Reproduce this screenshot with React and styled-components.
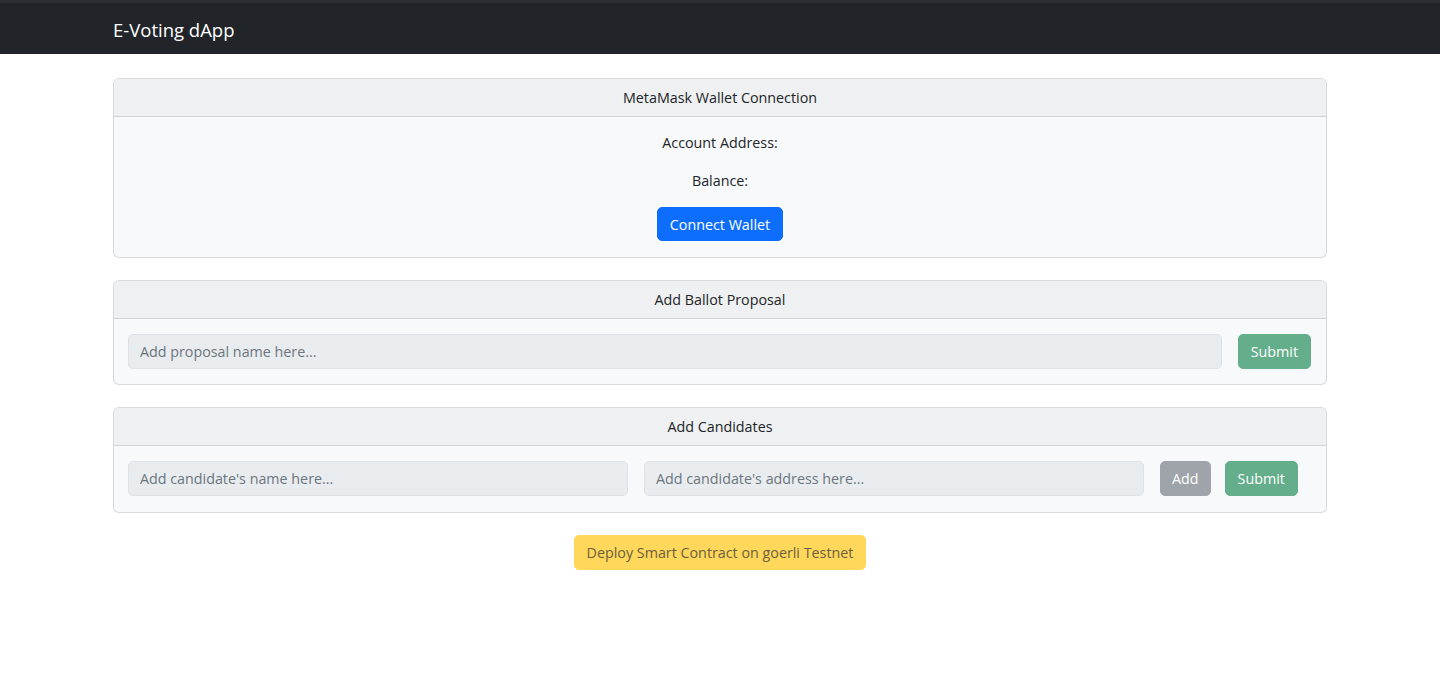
import React from 'react';
import styled, { createGlobalStyle } from 'styled-components';

const GlobalStyle = createGlobalStyle`
    body {
        margin: 0;
        background: #fff;
        font-family: 'Open Sans', 'Noto Sans', sans-serif;
        font-size: 14.3px;
        color: #212529;
    }
    * { box-sizing: border-box; }
`

const Navbar = styled.nav`
    height: 54px;
    background-color: #212529;
    border-top: 3px solid #2c2f33;
    display: flex;
    align-items: center;
    padding-left: 113px;
`

const Brand = styled.div`
    color: #fff;
    font-size: 18.5px;
    padding-top: 2px;
`

const Main = styled.main`
    width: 1214px;
    margin: 24px auto 0;
    display: flex;
    flex-direction: column;
    gap: 22px;
`

const Card = styled.section`
    border: 1px solid rgba(0,0,0,0.12);
    border-radius: 6px;
    background-color: #f8f9fa;
    overflow: hidden;
`

const CardHeader = styled.div`
    height: 38px;
    display: flex;
    align-items: center;
    justify-content: center;
    background-color: #eff0f1;
    border-bottom: 1px solid rgba(0,0,0,0.12);
`

const CenterBody = styled.div`
    display: flex;
    flex-direction: column;
    align-items: center;
    gap: 14px;
    padding: 14px 15px 16px;
`

const Line = styled.div`
    line-height: 24px;
`

const RowBody = styled.div`
    display: ${props => props.grid ? 'grid' : 'flex'};
    grid-template-columns: 500px 500px auto auto;
    justify-content: start;
    gap: 16px;
    padding: 15px 15px ${props => props.grid ? 16 : 15}px 14px;
`

const Input = styled.input`
    flex: 1;
    height: 35px;
    padding: 0 11px;
    font-family: inherit;
    font-size: 14.3px;
    color: #212529;
    background-color: #e9ecef;
    border: 1px solid #dee2e6;
    border-radius: 5px;
    &::placeholder { color: #6c757d; }
`

const Button = styled.button`
    height: ${props => props.h || 35}px;
    padding: 0 ${props => props.px || 12}px;
    font-family: inherit;
    font-size: 14.3px;
    color: ${props => props.fg || '#fff'};
    background-color: ${props => props.bg};
    border: 1px solid ${props => props.bg};
    border-radius: 5px;
    cursor: pointer;
`

const Footer = styled.div`
    display: flex;
    justify-content: center;
`

export default function App() {
    return (
        <>
            <GlobalStyle />
            <Navbar>
                <Brand>E-Voting dApp</Brand>
            </Navbar>
            <Main>
                <Card>
                    <CardHeader>MetaMask Wallet Connection</CardHeader>
                    <CenterBody>
                        <Line>Account Address:</Line>
                        <Line>Balance:</Line>
                        <Button bg="#0d6efd" h={34}>Connect Wallet</Button>
                    </CenterBody>
                </Card>
                <Card>
                    <CardHeader>Add Ballot Proposal</CardHeader>
                    <RowBody>
                        <Input disabled placeholder="Add proposal name here..." />
                        <Button bg="#64ae8b">Submit</Button>
                    </RowBody>
                </Card>
                <Card>
                    <CardHeader>Add Candidates</CardHeader>
                    <RowBody grid>
                        <Input disabled placeholder="Add candidate's name here..." />
                        <Input disabled placeholder="Add candidate's address here..." />
                        <Button bg="#9ea4a9" px={11}>Add</Button>
                        <Button bg="#64ae8b" style={{ marginLeft: -2 }}>Submit</Button>
                    </RowBody>
                </Card>
                <Footer>
                    <Button bg="#ffd75a" fg="#6b6040">Deploy Smart Contract on goerli Testnet</Button>
                </Footer>
            </Main>
        </>
    );
}
